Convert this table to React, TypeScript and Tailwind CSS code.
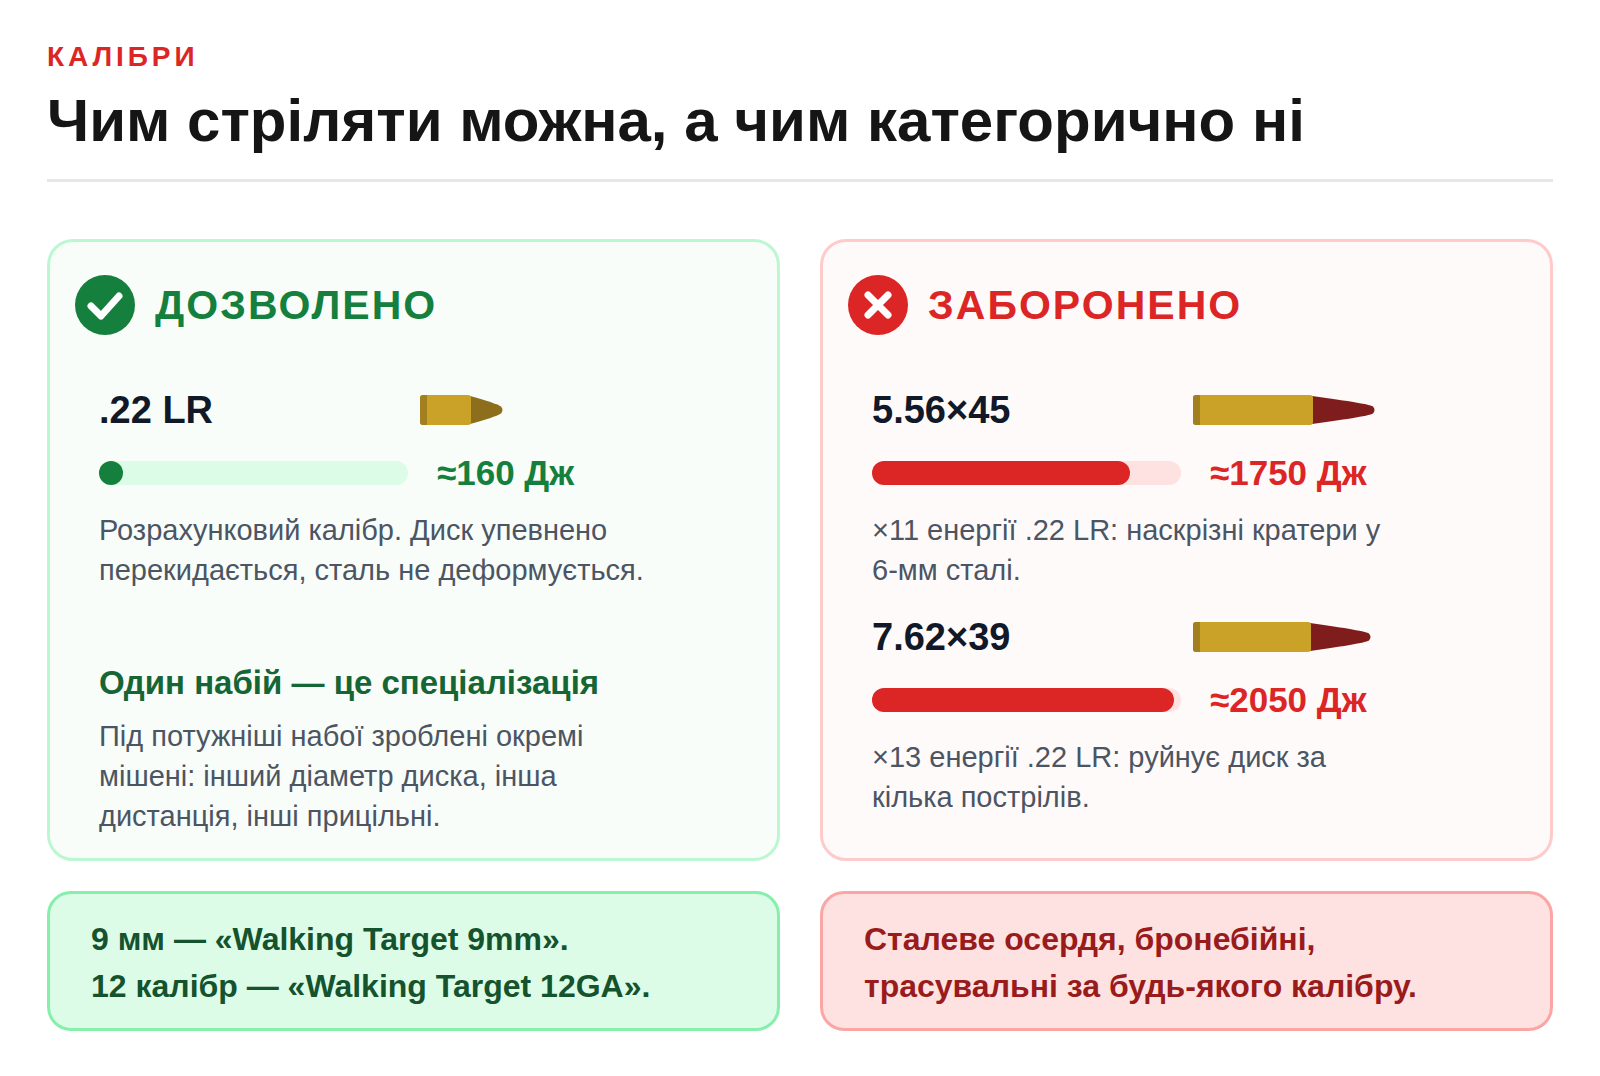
import React from "react";

const MAX_J = 2100;

function Bullet({ casing, tip, tipColor }: { casing: number; tip: number; tipColor: string }) {
  const w = casing + tip;
  return (
    <svg width={w} height={30} viewBox={`0 0 ${w} 30`} className="block">
      <path
        d={`M${casing - 1} 1 C${casing + tip * 0.45} 5 ${w - 6} 9 ${w - 2} 11.5 Q${w + 1} 15 ${w - 2} 18.5 C${w - 6} 21 ${casing + tip * 0.45} 25 ${casing - 1} 29 Z`}
        fill={tipColor}
      />
      <rect x={0} y={0} width={casing} height={30} rx={3} fill="#c9a227" />
      <path d="M3 0 H7 V30 H3 A3 3 0 0 1 0 27 V3 A3 3 0 0 1 3 0 Z" fill="#a27f1f" />
    </svg>
  );
}

function CheckIcon() {
  return (
    <svg width={60} height={60} viewBox="0 0 60 60" className="shrink-0">
      <circle cx={30} cy={30} r={30} fill="#15803d" />
      <path d="M16 31 L26 41 L44 21" fill="none" stroke="#fff" strokeWidth={7} strokeLinecap="round" strokeLinejoin="round" />
    </svg>
  );
}

function CrossIcon() {
  return (
    <svg width={60} height={60} viewBox="0 0 60 60" className="shrink-0">
      <circle cx={30} cy={30} r={30} fill="#dc2626" />
      <path d="M20 20 L40 40 M40 20 L20 40" fill="none" stroke="#fff" strokeWidth={7} strokeLinecap="round" />
    </svg>
  );
}

interface Ammo {
  name: string;
  joules: number;
  casing: number;
  tip: number;
  tipColor: string;
  lines: string[];
}

function AmmoRow({ ammo, good }: { ammo: Ammo; good: boolean }) {
  const pct = Math.max((ammo.joules / MAX_J) * 100, (24 / 309) * 100);
  return (
    <div>
      <div className="grid grid-cols-[309px_1fr] items-center gap-x-3 gap-y-[23px]">
        <div className="text-[38px] leading-[44px] font-bold text-[#111827]">{ammo.name}</div>
        <div>
          <Bullet casing={ammo.casing} tip={ammo.tip} tipColor={ammo.tipColor} />
        </div>
        <div className={`h-6 rounded-full ${good ? "bg-[#dcfce7]" : "bg-[#fee2e2]"}`}>
          <div
            className={`h-full rounded-full ${good ? "bg-[#15803d]" : "bg-[#dc2626]"}`}
            style={{ width: `${pct}%` }}
          />
        </div>
        <div className={`pl-[17px] text-[35px] leading-[36px] font-bold ${good ? "text-[#15803d]" : "text-[#dc2626]"}`}>
          ≈{ammo.joules} Дж
        </div>
      </div>
      <p className="mt-[19px] text-[29px] leading-[40px] text-[#4b5563]">
        {ammo.lines[0]}
        <br />
        {ammo.lines[1]}
      </p>
    </div>
  );
}

const allowed: Ammo = {
  name: ".22 LR",
  joules: 160,
  casing: 51,
  tip: 32,
  tipColor: "#8d6e1d",
  lines: ["Розрахунковий калібр. Диск упевнено", "перекидається, сталь не деформується."],
};

const forbidden: Ammo[] = [
  {
    name: "5.56×45",
    joules: 1750,
    casing: 120,
    tip: 62,
    tipColor: "#7f1d1d",
    lines: ["×11 енергії .22 LR: наскрізні кратери у", "6-мм сталі."],
  },
  {
    name: "7.62×39",
    joules: 2050,
    casing: 118,
    tip: 60,
    tipColor: "#7f1d1d",
    lines: ["×13 енергії .22 LR: руйнує диск за", "кілька пострілів."],
  },
];

export default function App() {
  return (
    <div className="min-h-screen bg-white px-[47px] pt-[41px] pb-10 font-['Liberation_Sans',Arial,sans-serif]">
      <div className="text-[28px] leading-[32px] font-bold tracking-[0.14em] text-[#dc2626]">КАЛІБРИ</div>
      <h1 className="mt-[13px] text-[60px] leading-[69px] font-bold text-[#151515]">
        Чим стріляти можна, а чим категорично ні
      </h1>
      <div className="mt-[24px] h-[3px] bg-[#e5e7eb]" />

      <div className="mt-[57px] grid grid-cols-2 gap-x-10 gap-y-[30px]">
        <div className="rounded-[26px] border-[3px] border-[#bbf7d0] bg-[#f8fdf9] pt-[33px] pb-[22px]">
          <div className="flex items-center gap-5 px-[25px]">
            <CheckIcon />
            <span className="text-[41px] leading-[48px] font-bold tracking-[0.05em] text-[#15803d]">ДОЗВОЛЕНО</span>
          </div>
          <div className="mt-[53px] px-[49px]">
            <AmmoRow ammo={allowed} good />
            <h3 className="mt-[75px] text-[33px] leading-[36px] font-bold text-[#166534]">
              Один набій — це спеціалізація
            </h3>
            <p className="mt-[15px] text-[29px] leading-[40px] text-[#4b5563]">
              Під потужніші набої зроблені окремі
              <br />
              мішені: інший діаметр диска, інша
              <br />
              дистанція, інші прицільні.
            </p>
          </div>
        </div>

        <div className="rounded-[26px] border-[3px] border-[#fecaca] bg-[#fffafa] pt-[33px] pb-[22px]">
          <div className="flex items-center gap-5 px-[25px]">
            <CrossIcon />
            <span className="text-[41px] leading-[48px] font-bold tracking-[0.05em] text-[#dc2626]">ЗАБОРОНЕНО</span>
          </div>
          <div className="mt-[53px] flex flex-col gap-[25px] px-[49px]">
            {forbidden.map((a) => (
              <AmmoRow key={a.name} ammo={a} good={false} />
            ))}
          </div>
        </div>

        <div className="rounded-[24px] border-[3px] border-[#86efac] bg-[#dcfce7] px-[41px] pt-[22px] pb-[18px] text-[32px] leading-[47px] font-bold text-[#14532d]">
          9 мм — «Walking Target 9mm».
          <br />
          12 калібр — «Walking Target 12GA».
        </div>
        <div className="rounded-[24px] border-[3px] border-[#fca5a5] bg-[#fee2e2] px-[41px] pt-[22px] pb-[18px] text-[32px] leading-[47px] font-bold text-[#991b1b]">
          Сталеве осердя, бронебійні,
          <br />
          трасувальні за будь-якого калібру.
        </div>
      </div>
    </div>
  );
}
